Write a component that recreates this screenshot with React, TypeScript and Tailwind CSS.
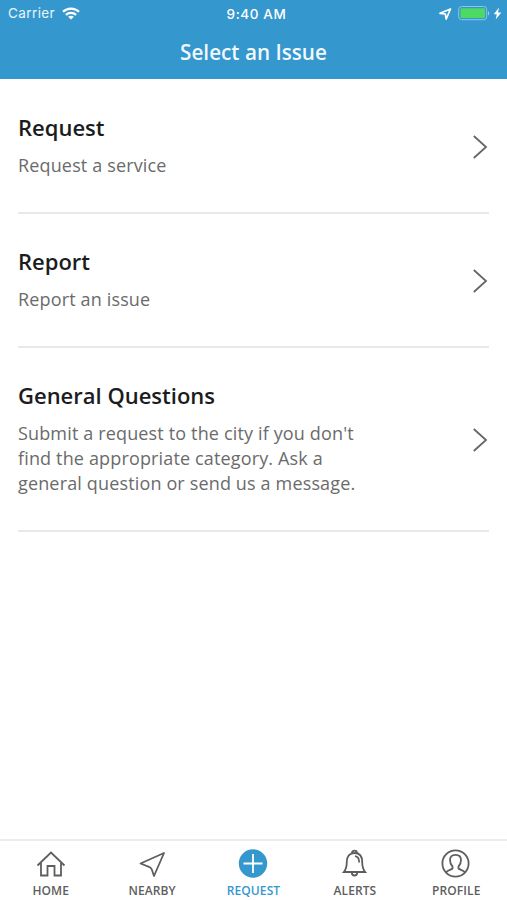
import type { ReactNode } from 'react';

type Issue = { title: string; lines: string[] };

const issues: Issue[] = [
  { title: 'Request', lines: ['Request a service'] },
  { title: 'Report', lines: ['Report an issue'] },
  {
    title: 'General Questions',
    lines: [
      "Submit a request to the city if you don't",
      'find the appropriate category. Ask a',
      'general question or send us a message.',
    ],
  },
];

function WifiIcon() {
  return (
    <svg width="18" height="13" viewBox="0 0 18 13" fill="none" stroke="#fff" strokeWidth="2.3">
      <path d="M1 4.8C5.4.5 12.6.5 17 4.8" />
      <path d="M3.9 7.8c2.9-2.7 7.3-2.7 10.2 0" />
      <path d="M9 12.6 6.1 9.8c1.700-1.400 4.100-1.400 5.800 0z" fill="#fff" stroke="none" />
    </svg>
  );
}

function StatusBar() {
  return (
    <div className="grid h-7 grid-cols-3 items-center pr-[5px] pl-2 font-['Inter',sans-serif] text-[13.5px] text-white">
      <div className="-mt-px flex items-center gap-[7px]">
        <span className="tracking-[0.4px] text-white/90">Carrier</span>
        <WifiIcon />
      </div>
      <span className="pl-[3px] text-center text-[13.5px] font-medium tracking-[0.6px] whitespace-nowrap text-white">9:40 AM</span>
      <div className="-mt-px flex items-center justify-end">
        <svg width="13" height="12" viewBox="0 0 13 12" fill="none" stroke="#fff" strokeWidth="1.7" strokeLinejoin="round">
          <path d="M1 5.3 11.5 1 7.2 11 6.3 6z" />
        </svg>
        <svg className="ml-[6px]" width="32" height="15" viewBox="0 0 32 15">
          <rect x=".7" y=".5" width="28" height="13.2" rx="3" fill="none" stroke="#8fc5e3" strokeWidth="1" />
          <rect x="2.5" y="2.2" width="24.5" height="9.8" rx="1" fill="#4cd964" />
          <path d="M30 5c1.6.6 1.6 4 0 4.6z" fill="#9bcbe5" />
        </svg>
        <svg className="ml-[3px]" width="9" height="13" viewBox="0 0 8 13" fill="#fff">
          <path d="M5.5.5.3 7.200h3L2.200 12.500 7.800 5.500H4.500z" />
        </svg>
      </div>
    </div>
  );
}

function IssueRow({ title, lines }: Issue) {
  return (
    <button className="flex w-full items-center justify-between border-b-2 border-[#e8e8e8] pt-8 pb-[34.7px] text-left">
      <span className="block">
        <span className="block text-[22px] leading-[30px] font-semibold text-[#1c1c1e]">{title}</span>
        <span className="mt-[11px] block text-[18px] leading-[24.7px] tracking-[0.15px] text-[#6b6b6b]">
          {lines.map((line) => (
            <span key={line} className="block whitespace-nowrap">{line}</span>
          ))}
        </span>
      </span>
      <svg className="mt-[5px] mr-px" width="16" height="26" viewBox="0 0 16 26" fill="none" stroke="#666" strokeWidth="1.8">
        <path d="M1.800 2 14 13 1.800 24" />
      </svg>
    </button>
  );
}

function Tab({ label, active, children }: { label: string; active?: boolean; children: ReactNode }) {
  return (
    <button className={`flex flex-col items-center pt-2 ${active ? 'text-[#3498ce]' : 'text-[#5e5e5e]'}`}>
      <svg width="32" height="32" viewBox="0 0 32 32" fill="none" stroke="currentColor" strokeWidth="1.8">
        {children}
      </svg>
      <span className="mt-[2px] text-[12px] leading-4 font-semibold tracking-[0.1px]">{label}</span>
    </button>
  );
}

export default function App() {
  return (
    <div className="flex h-[900px] w-[507px] flex-col overflow-hidden bg-white font-['Open_Sans',sans-serif]">
      <header className="h-[79px] bg-[#3498ce]">
        <StatusBar />
        <h1 className="mt-2 text-center text-[20.7px] leading-8 font-semibold text-white/95">Select an Issue</h1>
      </header>
      <main className="flex-1 px-[18px] pt-[0.6px]">
        {issues.map((issue) => (
          <IssueRow key={issue.title} {...issue} />
        ))}
      </main>
      <nav className="grid h-[61px] grid-cols-5 border-t-2 border-[#ececec]">
        <Tab label="HOME">
          <path d="M2.500 16.500 16 3.500l13.500 13M6 14v12.500h6.500V17h7v9.500H26V14" />
        </Tab>
        <Tab label="NEARBY">
          <path d="M4.500 14.500 28 4 18 27 15.800 20.500Q15 18.500 13 17.800z" strokeLinejoin="round" />
        </Tab>
        <Tab label="REQUEST" active>
          <circle cx="16" cy="14.500" r="14.200" fill="currentColor" stroke="none" />
          <path d="M6.500 14.500h19M16 5v19" stroke="#fff" />
        </Tab>
        <Tab label="ALERTS">
          <path d="M4.800 23c2.600-3 3-5.500 3-10 0-5.500 2.700-9 7.700-9s7.700 3.500 7.700 9c0 4.500.4 7 3 10z" />
          <path d="M13 4c0-3.300 5-3.300 5 0M12.800 23.500c0 4 5.400 4 5.400 0M16 7.200c3 .3 4.200 2.300 4.200 6.300" />
        </Tab>
        <Tab label="PROFILE">
          <circle cx="15.500" cy="14.500" r="13.100" />
          <path d="M6 23.500c1.500-2.500 5-2.500 6.500-4v-2c-2-2-2.500-4-2.500-6.500 0-3.500 2-5.200 5.500-5.200S21 7.500 21 11c0 2.500-.5 4.500-2.500 6.500v2c1.500 1.500 5 1.500 6.500 4" />
        </Tab>
      </nav>
    </div>
  );
}
